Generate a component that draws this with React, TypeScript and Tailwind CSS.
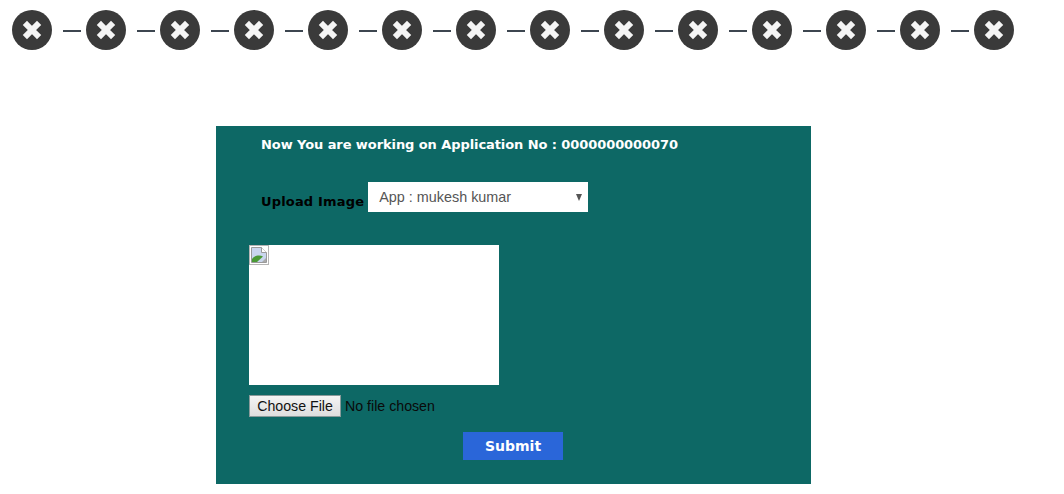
const steps = Array.from({ length: 14 }, (_, i) => i);

const StepIcon = () => (
  <svg width="40" height="40" viewBox="0 0 40 40" className="shrink-0">
    <circle cx="20" cy="20" r="20" fill="#3a3a3a" />
    <path d="M15 15L25 25M25 15L15 25" stroke="#f5f5f5" strokeWidth="6" strokeLinecap="square" />
  </svg>
);

const BrokenImage = () => (
  <svg width="20" height="20" viewBox="0 0 20 20" className="block">
    <rect x="0.5" y="0.5" width="19" height="19" fill="#fff" stroke="#b5b5b5" />
    <path d="M2.5 2.5H12.5L17.5 7.5V17.5H2.5Z" fill="#c9d6ee" stroke="#9a9a9a" />
    <path d="M12.5 2.5V7.5H17.5" fill="#fff" stroke="#9a9a9a" />
    <path d="M3 17V14C6 10 11 10 14 11.5L8 17Z" fill="#4a9a35" />
    <path d="M13 17L17 13V17Z" fill="#a9a9a9" />
  </svg>
);

export default function App() {
  return (
    <div className="h-[494px] w-[1064px] overflow-hidden bg-white font-['Liberation_Sans',sans-serif]">
      <div className="flex items-center pl-3 pt-[10px]">
        {steps.map((s) => (
          <div key={s} className="flex items-center">
            <StepIcon />
            {s < 13 && <div className="ml-[11px] mr-[5px] mt-0.5 h-0.5 w-[18px] bg-[#3d4650]" />}
          </div>
        ))}
      </div>

      <div className="ml-[216px] mt-[76px] h-[358px] w-[595px] bg-[#0d6865] pl-[33px]">
        <p className="pl-3 pt-[10px] font-['DejaVu_Sans',sans-serif] text-[13px] font-bold leading-[17px] tracking-[-0.08px] text-white">
          Now You are working on Application No : 0000000000070
        </p>

        <div className="mt-[29px] flex items-start pl-3">
          <span className="mt-[11px] font-['DejaVu_Sans',sans-serif] text-[13px] font-bold leading-[17px] tracking-[0.17px] text-black">
            Upload Image
          </span>
          <div className="ml-1 flex h-[30px] w-[220px] items-center justify-between bg-white pl-[11px] pr-[6px] text-[14.4px] text-[#555]">
            <span className="pt-0.5">App : mukesh kumar</span>
            <span className="h-0 w-0 border-x-[3.5px] border-t-[7px] border-x-transparent border-t-[#555]" />
          </div>
        </div>

        <div className="mt-[33px] h-[140px] w-[250px] bg-white">
          <BrokenImage />
        </div>

        <div className="mt-[10px] flex h-[22px] items-center text-[14.2px] text-[#0a0a0a]">
          <button className="h-[22px] w-[92px] border border-[#8a9a9a] bg-linear-to-b from-[#f4f4f4] to-[#dedede] leading-none text-[#111]">
            Choose File
          </button>
          <span className="ml-1 pt-0.5">No file chosen</span>
        </div>

        <button className="ml-[214px] mt-[15px] block h-7 w-[100px] bg-[#2a66d9] font-['DejaVu_Sans',sans-serif] text-[14px] font-bold text-white">
          Submit
        </button>
      </div>
    </div>
  );
}
